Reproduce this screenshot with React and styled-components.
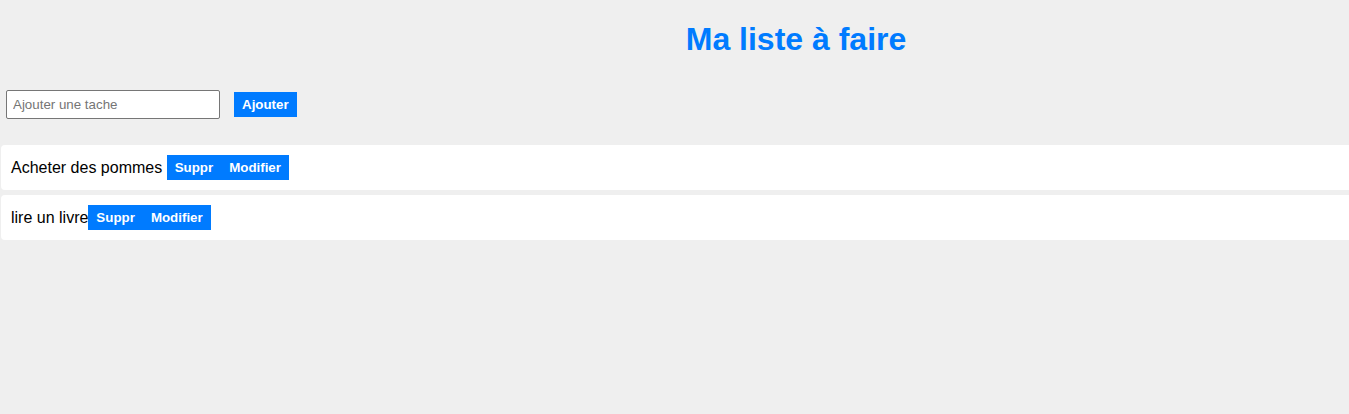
import { useState } from "react";
import styled, { createGlobalStyle } from "styled-components";

const GlobalStyle = createGlobalStyle`
  html, body {
    margin: 0;
    background: #efefef;
    font-family: "Liberation Sans", Arial, sans-serif;
    overflow-x: hidden;
  }
`;

function App() {
  const [text, setText] = useState("");
  const [todos, setTodos] = useState(["Acheter des pommes ", "lire un livre"]);

  function addTodo() {
    if (text.trim() === "") return;
    setTodos(prev => [...prev, text]);
    setText("");
  }

  function removeTodo(index) {
    setTodos(prev => prev.filter((_, i) => i !== index));
  }

  return (
    <Page>
      <GlobalStyle />
      <Title>Ma liste à faire</Title>
      <Form onSubmit={e => { e.preventDefault(); addTodo(); }}>
        <Input
          placeholder="Ajouter une tache"
          value={text}
          onChange={e => setText(e.target.value)}
        />
        <Button type="submit">Ajouter</Button>
      </Form>
      <List>
        {todos.map((todo, i) => (
          <Item key={i}>
            <Label>{todo}</Label>
            <Button onClick={() => removeTodo(i)}>Suppr</Button>
            <Button>Modifier</Button>
          </Item>
        ))}
      </List>
    </Page>
  );
}

const Page = styled.div`
  width: 1592px;
`;

const Title = styled.h1`
  margin: 21px 0;
  text-align: center;
  color: #007bff;
  font-size: 32px;
  font-weight: bold;
  line-height: 37px;
`;

const Form = styled.form`
  display: flex;
  align-items: center;
  gap: 14px;
  padding: 11px 6px 0;
`;

const Input = styled.input`
  width: 200px;
  padding: 6px;
  border: 1px solid #767676;
  border-radius: 2px;
  font-family: "Liberation Sans", Arial, sans-serif;
  font-size: 13.333px;
  line-height: 15px;
  background: #fff;

  &::placeholder {
    color: #757575;
  }
`;

const Button = styled.button`
  padding: 5px 8px;
  border: none;
  background: #007bff;
  color: #fff;
  font-family: "Liberation Sans", Arial, sans-serif;
  font-size: 13.333px;
  font-weight: bold;
  line-height: 15px;
  cursor: pointer;
`;

const List = styled.ul`
  list-style: none;
  margin: 26px 0 0;
  padding: 0 0 0 1px;
  display: flex;
  flex-direction: column;
  gap: 5px;
`;

const Item = styled.li`
  display: flex;
  align-items: center;
  padding: 10px;
  background: #fff;
  border-radius: 4px;
`;

const Label = styled.span`
  font-size: 16px;
  color: #000;
  white-space: pre;
`;

export default App;
